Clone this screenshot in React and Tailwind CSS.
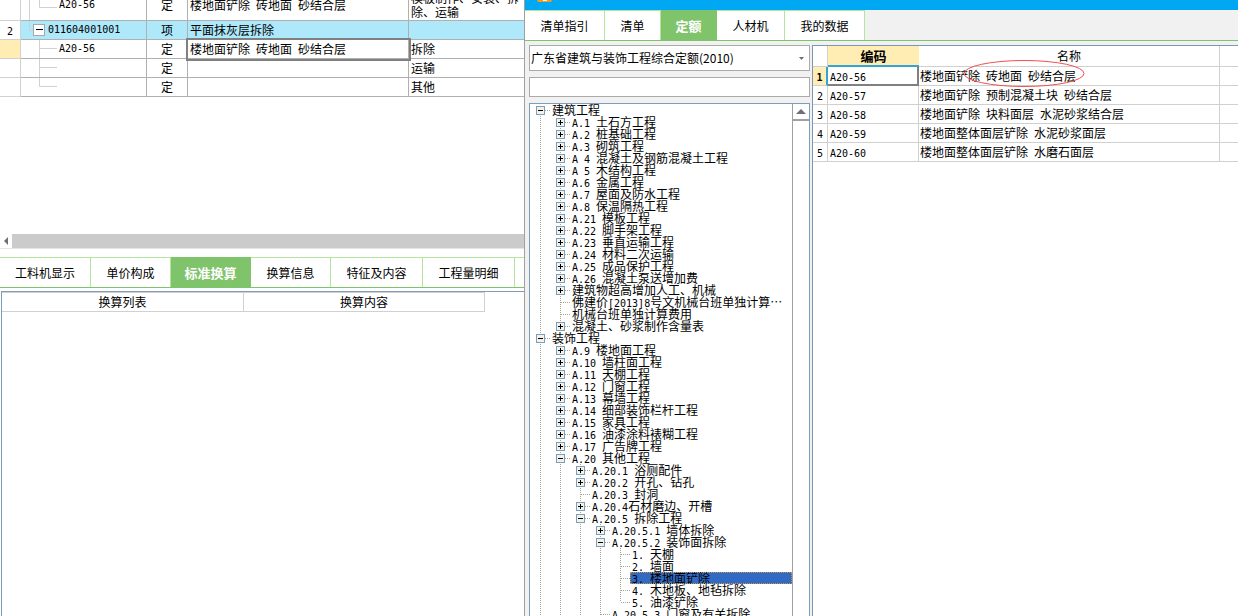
import { useState } from 'react';

// Latin runs use a monospaced face half as wide as a Chinese glyph
function T({ children }) {
  return children.split(/([\x20-\x7e]+)/).map((part, i) =>
    i % 2 ? (
      <span key={i} className="whitespace-pre text-[10px] leading-none font-['DejaVu_Sans_Mono',monospace]">
        {part}
      </span>
    ) : (
      part
    )
  );
}

const budgetRows = [
  { no: '', code: 'A20-56', kind: '定', name: '楼地面铲除 砖地面 砂结合层', work: '模板制作、安装、拆除、运输', guide: 'M29.5 0V31M39.5 0V18.5H57', height: 31 },
  { no: '2', code: '011604001001', kind: '项', name: '平面抹灰层拆除', work: '', guide: 'M29.5 0V9.5H33', height: 18, parent: true },
  { no: '', code: 'A20-56', kind: '定', name: '楼地面铲除 砖地面 砂结合层', work: '拆除', guide: 'M39.5 0V18M39.5 8.5H57', height: 18, current: true },
  { no: '', code: '', kind: '定', name: '', work: '运输', guide: 'M39.5 0V18M39.5 8.5H57', height: 18 },
  { no: '', code: '', kind: '定', name: '', work: '其他', guide: 'M39.5 0V8.5H57', height: 18 },
];

const detailTabs = [
  { label: '工料机显示', width: 'w-[91px]' },
  { label: '单价构成', width: 'w-[80px]' },
  { label: '标准换算', width: 'w-[80px]' },
  { label: '换算信息', width: 'w-[80px]' },
  { label: '特征及内容', width: 'w-[92px]' },
  { label: '工程量明细', width: 'w-[92px]' },
];

const queryTabs = [
  { label: '清单指引', width: 'w-[80px]' },
  { label: '清单', width: 'w-[56px]' },
  { label: '定额', width: 'w-[56px]' },
  { label: '人材机', width: 'w-[68px]' },
  { label: '我的数据', width: 'w-[80px]' },
];

// [level, state, label, last sibling]
const tree = [
  [0, '-', '建筑工程'],
  [1, '+', 'A.1 土石方工程'],
  [1, '+', 'A.2 桩基础工程'],
  [1, '+', 'A.3 砌筑工程'],
  [1, '+', 'A 4 混凝土及钢筋混凝土工程'],
  [1, '+', 'A 5 木结构工程'],
  [1, '+', 'A.6 金属工程'],
  [1, '+', 'A.7 屋面及防水工程'],
  [1, '+', 'A.8 保温隔热工程'],
  [1, '+', 'A.21 模板工程'],
  [1, '+', 'A.22 脚手架工程'],
  [1, '+', 'A.23 垂直运输工程'],
  [1, '+', 'A.24 材料二次运输'],
  [1, '+', 'A.25 成品保护工程'],
  [1, '+', 'A.26 混凝土泵送增加费'],
  [1, '+', '建筑物超高增加人工、机械'],
  [1, '', '佛建价[2013]8号文机械台班单独计算…'],
  [1, '', '机械台班单独计算费用'],
  [1, '+', '混凝土、砂浆制作含量表', true],
  [0, '-', '装饰工程'],
  [1, '+', 'A.9 楼地面工程'],
  [1, '+', 'A.10 墙柱面工程'],
  [1, '+', 'A.11 天棚工程'],
  [1, '+', 'A.12 门窗工程'],
  [1, '+', 'A.13 幕墙工程'],
  [1, '+', 'A.14 细部装饰栏杆工程'],
  [1, '+', 'A.15 家具工程'],
  [1, '+', 'A.16 油漆涂料裱糊工程'],
  [1, '+', 'A.17 广告牌工程'],
  [1, '-', 'A.20 其他工程'],
  [2, '+', 'A.20.1 浴厕配件'],
  [2, '+', 'A.20.2 开孔、钻孔'],
  [2, '', 'A.20.3 封洞'],
  [2, '+', 'A.20.4石材磨边、开槽'],
  [2, '-', 'A.20.5 拆除工程'],
  [3, '+', 'A.20.5.1 墙体拆除'],
  [3, '-', 'A.20.5.2 装饰面拆除'],
  [4, '', '1. 天棚'],
  [4, '', '2. 墙面'],
  [4, '', '3. 楼地面铲除'],
  [4, '', '4. 木地板、地毡拆除'],
  [4, '', '5. 油漆铲除', true],
  [3, '', 'A.20.5.3 门窗及有关拆除'],
];

const quotas = [
  ['A20-56', '楼地面铲除 砖地面 砂结合层'],
  ['A20-57', '楼地面铲除 预制混凝土块 砂结合层'],
  ['A20-58', '楼地面铲除 块料面层 水泥砂浆结合层'],
  ['A20-59', '楼地面整体面层铲除 水泥砂浆面层'],
  ['A20-60', '楼地面整体面层铲除 水磨石面层'],
];

function Tabs({ tabs, initial, fill }) {
  const [active, setActive] = useState(initial);
  return (
    <div role="tablist" className="flex shrink-0 border-b border-[#7fc36a]">
      {tabs.map((tab) => (
        <button
          key={tab.label}
          role="tab"
          aria-selected={tab.label === active}
          onClick={() => setActive(tab.label)}
          className={`${tab.width} h-[30px] shrink-0 whitespace-nowrap border-t border-r ${
            tab.label === active
              ? 'border-[#7fc36a] bg-[#7fc36a] text-[13px] font-bold text-white'
              : 'border-[#b3e59f] bg-white'
          }`}
        >
          {tab.label}
        </button>
      ))}
      {fill && <div className="flex-1 border-t border-[#b3e59f] bg-white" />}
    </div>
  );
}

function BudgetTable() {
  return (
    <table className="w-full table-fixed border-separate border-spacing-0">
      <colgroup>
        <col className="w-[21px]" />
        <col className="w-[126px]" />
        <col className="w-[41px]" />
        <col className="w-[221px]" />
        <col />
      </colgroup>
      <tbody>
        {budgetRows.map((row, i) => (
          <tr key={i} className={row.parent ? 'bg-[#ade8fb]' : 'bg-white'}>
            <td
              className={`border-r border-b border-[#d0d0d0] p-0 text-center ${
                row.current ? 'bg-[#ffedb3]' : 'bg-white'
              }`}
            >
              <T>{row.no}</T>
            </td>
            <td className="border-r border-b border-[#b0b0b0] p-0">
              <div className="flex items-center">
                <svg
                  className="shrink-0"
                  width={row.parent ? 27 : 38}
                  height={row.height}
                  viewBox={`21 0 ${row.parent ? 27 : 38} ${row.height}`}
                  fill="none"
                  stroke="#d0d0d0"
                >
                  <path d={row.guide} />
                  {row.parent && (
                    <>
                      <rect x="33.5" y="3.5" width="11" height="11" fill="#fff" stroke="#a8a8a8" />
                      <path d="M36 8.5H43" stroke="#000" />
                    </>
                  )}
                </svg>
                <T>{row.code}</T>
              </div>
            </td>
            <td className="border-r border-b border-[#b0b0b0] p-0 text-center">{row.kind}</td>
            <td
              className={`border-r border-b border-[#b0b0b0] py-0 pr-0 pl-0.5 ${
                row.current ? 'outline-2 outline-[#808080]' : ''
              }`}
            >
              <T>{row.name}</T>
            </td>
            <td className="border-b border-[#b0b0b0] py-0 pr-1 pl-0.5">{row.work}</td>
          </tr>
        ))}
      </tbody>
    </table>
  );
}

function TreeRow({ node, selected, onSelect }) {
  const [level, state, label, last] = node;
  return (
    <li className="flex h-3" role="treeitem" aria-selected={selected}>
      {Array.from({ length: level }, (_, i) => (
        <svg key={i} className="shrink-0" width="20" height="12" stroke="#a5a594" strokeDasharray="1 1">
          <path d="M10.5 0V12" />
        </svg>
      ))}
      <svg className="shrink-0" width="20" height="12" stroke="#a5a594" fill="none">
        <path d={`M10.5 ${label === '建筑工程' ? 6 : 0}V${last ? 6 : 12}M11 6.5H20`} strokeDasharray="1 1" />
        {state && (
          <>
            <rect x="6.5" y="2.5" width="8" height="8" fill="#f4f1ea" stroke="#7b9ebd" />
            <path d={state === '+' ? 'M8 6.5H13M10.5 4V9' : 'M8 6.5H13'} stroke="#000" />
          </>
        )}
      </svg>
      <button
        onClick={onSelect}
        className={`h-3 whitespace-nowrap pl-0.5 text-left leading-3 ${
          selected ? 'flex-1 bg-[#316ac5] outline-1 -outline-offset-1 outline-dotted outline-[#d0913c]' : ''
        }`}
      >
        <T>{label}</T>
      </button>
    </li>
  );
}

function QuotaTree() {
  const [selected, setSelected] = useState('3. 楼地面铲除');
  return (
    <div className="mt-1.5 flex min-h-0 flex-1 overflow-hidden border border-b-0 border-[#7b9ebd] bg-white">
      <ul role="tree" className="min-w-0 flex-1">
        {tree.map((node) => (
          <TreeRow
            key={node[2]}
            node={node}
            selected={node[2] === selected}
            onSelect={() => setSelected(node[2])}
          />
        ))}
      </ul>
      <div className="w-[17px] border-l border-[#a0a0a0]">
        <button aria-label="向上滚动" className="flex h-[17px] w-full items-center justify-center border-b-2 border-[#a0a0a0]">
          <svg width="10" height="5" fill="#6d6d7d">
            <path d="M0 5L5 0L10 5Z" />
          </svg>
        </button>
      </div>
    </div>
  );
}

function QuotaTable() {
  return (
    <div className="min-w-0 flex-1 border-t border-l border-[#7b97b5] bg-white">
      <table className="w-full table-fixed border-separate border-spacing-0">
        <colgroup>
          <col className="w-[15px]" />
          <col className="w-[91px]" />
          <col className="w-[301px]" />
          <col />
        </colgroup>
        <thead>
          <tr className="h-[21px]">
            <th className="border-r border-b border-[#d0d0d0] p-0" />
            <th className="border-b-2 border-[#33a5d4] bg-[#ffedb3] p-0 text-[13px] font-bold">编码</th>
            <th className="border-r border-b border-[#d0d0d0] p-0 font-normal">名称</th>
            <th className="border-b border-[#d0d0d0] p-0" />
          </tr>
        </thead>
        <tbody>
          {quotas.map(([code, name], i) => (
            <tr key={code} className="h-[19px]">
              <td
                className={`border-b p-0 text-center ${
                  i === 0
                    ? 'border-r-2 border-r-[#33a5d4] border-b-[#d0d0d0] bg-[#ffedb3] font-bold'
                    : 'border-r border-[#d0d0d0]'
                }`}
              >
                <T>{String(i + 1)}</T>
              </td>
              <td
                className={`py-0 pr-0 pl-0.5 ${
                  i === 0 ? 'border-r-2 border-b-2 border-[#808080]' : 'border-r border-b border-[#d0d0d0]'
                }`}
              >
                <T>{code}</T>
              </td>
              <td className="relative whitespace-nowrap border-r border-b border-[#d0d0d0] py-0 pr-0 pl-px">
                <T>{name}</T>
                {i === 0 && (
                  <svg className="absolute -top-2 left-11 z-10" width="122" height="29" fill="none" stroke="#f05050">
                    <ellipse cx="61" cy="14.5" rx="60" ry="13" />
                  </svg>
                )}
              </td>
              <td className="border-b border-[#d0d0d0] p-0" />
            </tr>
          ))}
        </tbody>
      </table>
    </div>
  );
}

export default function App() {
  return (
    <div className="grid h-screen grid-cols-[525fr_713fr] overflow-hidden bg-white font-['Noto_Sans_CJK_SC',sans-serif] text-[12px] leading-[14px] text-black">
      {/* Budget list */}
      <div className="flex min-w-0 flex-col overflow-hidden border-r border-[#a0a0a0]">
        <div className="flex h-[97px] shrink-0 flex-col justify-end overflow-hidden">
          <BudgetTable />
        </div>
        <div className="mt-[137px] flex h-[15px] shrink-0 border-b border-[#e5e5e5] bg-[#cbcbcb]">
          <button aria-label="向左滚动" className="flex w-3 items-center justify-center bg-white">
            <svg width="4" height="8" fill="#6d6d7d">
              <path d="M4 0V8L0 4Z" />
            </svg>
          </button>
        </div>
        <div className="h-2 shrink-0" />
        <Tabs tabs={detailTabs} initial="标准换算" fill />
        <div className="mt-[3px] ml-px flex-1 border-t border-l border-[#7b9ebd]">
          <table className="table-fixed border-separate border-spacing-0">
            <thead>
              <tr className="h-5">
                <th className="w-[242px] border-t border-r border-b border-[#d0d0d0] p-0 font-normal">换算列表</th>
                <th className="w-[241px] border-t border-r border-b border-[#d0d0d0] p-0 font-normal">换算内容</th>
              </tr>
            </thead>
          </table>
        </div>
      </div>

      {/* Quota query window */}
      <div className="flex min-h-0 min-w-0 flex-col bg-[#f1f1f1]">
        <div className="h-2.5 shrink-0 bg-[#00a8f3] pl-3">
          <svg width="15" height="2">
            <path d="M0 0H15L14 2H1Z" fill="#f79a1e" />
            <path d="M6 0H10V1H6Z" fill="#fff" />
          </svg>
        </div>
        <Tabs tabs={queryTabs} initial="定额" />
        <div className="flex min-h-0 flex-1 pt-1">
          <div className="flex w-[287px] shrink-0 flex-col pr-0.5 pl-1">
            <div className="relative">
              <select
                aria-label="定额库"
                className="block h-[26px] w-full appearance-none border border-[#aaaaaa] bg-white pl-px"
              >
                <option>广东省建筑与装饰工程综合定额(2010)</option>
              </select>
              <svg className="pointer-events-none absolute top-3 right-1.5" width="5" height="3" fill="#6d6d7d">
                <path d="M0 0H5L2.5 3Z" />
              </svg>
            </div>
            <input
              type="text"
              aria-label="搜索定额"
              className="mt-1.5 h-5 w-full border border-[#aaaaaa] bg-white px-1"
            />
            <QuotaTree />
          </div>
          <QuotaTable />
        </div>
      </div>
    </div>
  );
}
